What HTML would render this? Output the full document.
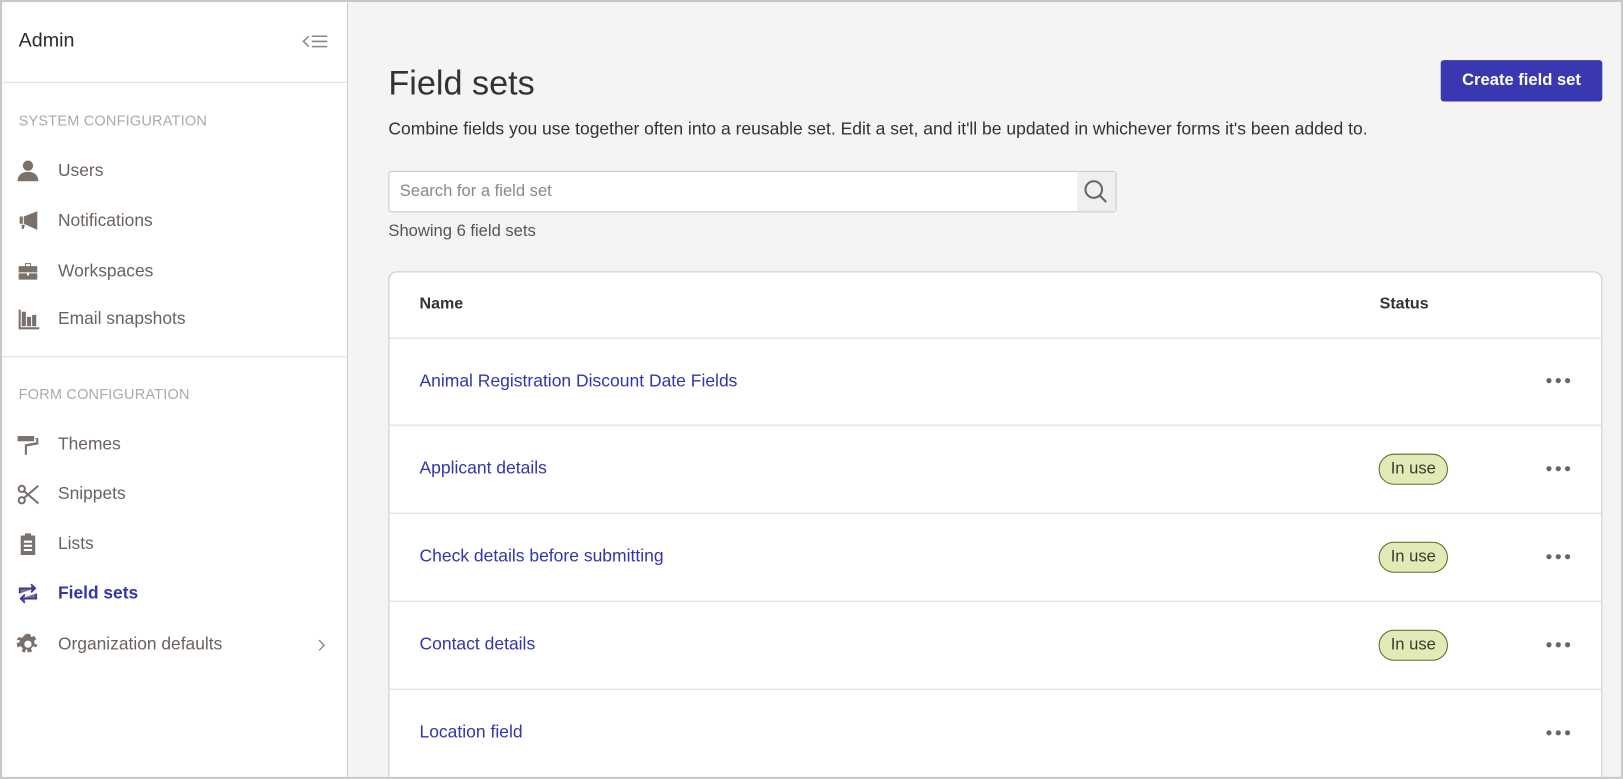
<!DOCTYPE html>
<html><head><meta charset="utf-8"><style>
*{box-sizing:border-box;margin:0;padding:0}
html,body{width:1623px;height:779px;overflow:hidden;background:#f4f4f4;font-family:"Liberation Sans",sans-serif}
#w{position:absolute;left:0;top:0;width:1567px;height:752px;transform:scale(1.03574);transform-origin:0 0;background:#f4f4f4;border:2px solid #c8c8c8;overflow:hidden}
.sb{position:absolute;left:0;top:0;width:334px;height:752px;background:#fff;border-right:1px solid #ccc}
.abs{position:absolute}
.adm{left:16px;top:27px;font-size:19px;color:#2b2b2b}
.hr{position:absolute;left:0;width:333px;height:1px;background:#ddd}
.sec{left:16px;font-size:14px;color:#aaa;letter-spacing:.2px}
.it{position:absolute;left:14px;height:24px;display:flex;align-items:center;font-size:16.8px;color:#6b625c}
.it svg{width:22px;height:22px;margin-right:18px;fill:#79716b}
.it.act{color:#3434ad;font-weight:bold}
.title{left:373px;top:59px;font-size:33px;color:#333;font-weight:300}
.desc{left:373px;top:113px;font-size:16.9px;color:#333}
.btn{left:1389px;top:56px;width:156px;height:40px;background:#3a38b0;color:#fff;font-weight:bold;font-size:16px;border-radius:3px;display:flex;align-items:center;justify-content:center}
.srch{left:373px;top:163px;width:703px;height:40px;background:#fff;border:1px solid #c8c8c8;border-radius:3px}
.srch span{position:absolute;left:10px;top:10px;font-size:16px;color:#888}
.srch .ib{position:absolute;right:0;top:0;width:37px;height:38px;background:#efefef}
.show{left:373px;top:213px;font-size:16px;color:#555}
.tbl{left:373px;top:260px;width:1172px;height:520px;background:#fff;border:1px solid #ccc;border-radius:8px}
.th{position:absolute;top:22px;font-size:15.5px;font-weight:bold;color:#333}
.rl{position:absolute;left:0;width:1170px;height:1px;background:#ddd}
.lk{position:absolute;left:29px;font-size:16.9px;color:#3434ad}
.pill{position:absolute;left:955px;width:67px;height:30px;border:1px solid #5b6b28;background:#e1ebb8;border-radius:15px;font-size:16px;color:#3b3b2b;display:flex;align-items:center;justify-content:center}
.dots{position:absolute;left:1117px;width:40px;height:6px;white-space:nowrap}
.dots i{display:inline-block;width:5px;height:5px;border-radius:50%;background:#666;margin-right:4px;vertical-align:top}
</style></head><body><div id="w">
<div class="sb">
<div class="abs adm">Admin</div>
<svg class="abs" style="left:288px;top:31px" width="28" height="14" viewBox="0 0 28 14"><path d="M8 2 L3 7 L8 12" stroke="#888" stroke-width="1.5" fill="none"/><path d="M11 2H26M11 7H26M11 12H26" stroke="#888" stroke-width="1.5"/></svg>
<div class="hr" style="top:77px"></div>
<div class="abs sec" style="top:106px">SYSTEM CONFIGURATION</div>
<div class="it" style="top:151px"><svg viewBox="0 0 22 22"><circle cx="11" cy="6" r="5"/><path d="M1 21c0-6 4-9 10-9s10 3 10 9z"/></svg>Users</div>
<div class="it" style="top:199px"><svg viewBox="0 0 22 22"><path d="M3 7h3v7H3zM7 7l13-5v18L7 14z"/><path d="M5 15h3l-1 4H5z"/></svg>Notifications</div>
<div class="it" style="top:248px"><svg viewBox="0 0 22 22"><path d="M8 3h6v3h6v6H2V6h6zM9 4v2h4V4zM2 13h8v2h2v-2h8v6H2z"/></svg>Workspaces</div>
<div class="it" style="top:294px"><svg viewBox="0 0 22 22"><path d="M2 2h2v17h18v2H2zM5 4h4v14H5zM10 9h4v9h-4zM15 7h4v11h-4z"/></svg>Email snapshots</div>
<div class="hr" style="top:342px"></div>
<div class="abs sec" style="top:370px">FORM CONFIGURATION</div>
<div class="it" style="top:415px"><svg viewBox="0 0 22 22"><path d="M1 3h16v5H1zM18 5h3v6l-11 2v8H8v-10l11-2V6h-1z"/></svg>Themes</div>
<div class="it" style="top:463px"><svg viewBox="0 0 22 22" fill="none"><circle cx="5" cy="6" r="3" stroke="#79716b" stroke-width="2" fill="none"/><circle cx="5" cy="17" r="3" stroke="#79716b" stroke-width="2" fill="none"/><path d="M7 8L21 20M7 15L21 3" stroke="#79716b" stroke-width="2"/></svg>Snippets</div>
<div class="it" style="top:511px"><svg viewBox="0 0 22 22"><path d="M8 1h6v2h4v19H4V3h4zM7 8v2h8V8zm0 4v2h8v-2zm0 4v2h8v-2z"/></svg>Lists</div>
<div class="it act" style="top:559px"><svg viewBox="0 0 22 22" fill="none" stroke="#3434ad" stroke-width="1.6"><path d="M3 11V6h15M14 2l4 4-4 4M19 11v5H4M8 12l-4 4 4 4"/></svg>Field sets</div>
<div class="it" style="top:608px"><svg viewBox="0 0 22 22"><path d="M9 1h4l1 3 3-1 2 3-2 2 .5 3H20l-1 3-3-1-2 2 1 3-4 1-1-3H9l-1 3-3-1 1-3-2-2-3 1-1-4 3-1v-2L0 7l2-3 3 1 2-2z"/><circle cx="11" cy="11" r="3.5" fill="#fff"/></svg>Organization defaults</div>
<svg class="abs" style="left:304px;top:615px" width="8" height="12"><path d="M2 1l5 5-5 5" stroke="#888" fill="none" stroke-width="1.3"/></svg>
</div>
<div class="abs title">Field sets</div>
<div class="abs desc">Combine fields you use together often into a reusable set. Edit a set, and it'll be updated in whichever forms it's been added to.</div>
<div class="abs btn">Create field set</div>
<div class="abs srch"><span>Search for a field set</span><div class="ib"><svg width="37" height="38" viewBox="0 0 37 38"><circle cx="16" cy="17" r="8" stroke="#666" stroke-width="2" fill="none"/><path d="M22 23l6 6" stroke="#666" stroke-width="2"/></svg></div></div>
<div class="abs show">Showing 6 field sets</div>
<div class="abs tbl">
<div class="th" style="left:29px">Name</div>
<div class="th" style="left:956px">Status</div>
<div class="rl" style="top:63px"></div>
<div class="lk" style="top:95px">Animal Registration Discount Date Fields</div>
<div class="dots" style="top:102px"><i></i><i></i><i></i></div>
<div class="rl" style="top:147px"></div>
<div class="lk" style="top:179px">Applicant details</div>
<div class="pill" style="top:175px">In use</div>
<div class="dots" style="top:187px"><i></i><i></i><i></i></div>
<div class="rl" style="top:232px"></div>
<div class="lk" style="top:264px">Check details before submitting</div>
<div class="pill" style="top:260px">In use</div>
<div class="dots" style="top:272px"><i></i><i></i><i></i></div>
<div class="rl" style="top:317px"></div>
<div class="lk" style="top:349px">Contact details</div>
<div class="pill" style="top:345px">In use</div>
<div class="dots" style="top:357px"><i></i><i></i><i></i></div>
<div class="rl" style="top:402px"></div>
<div class="lk" style="top:434px">Location field</div>
<div class="dots" style="top:442px"><i></i><i></i><i></i></div>
</div>
</div></body></html>
